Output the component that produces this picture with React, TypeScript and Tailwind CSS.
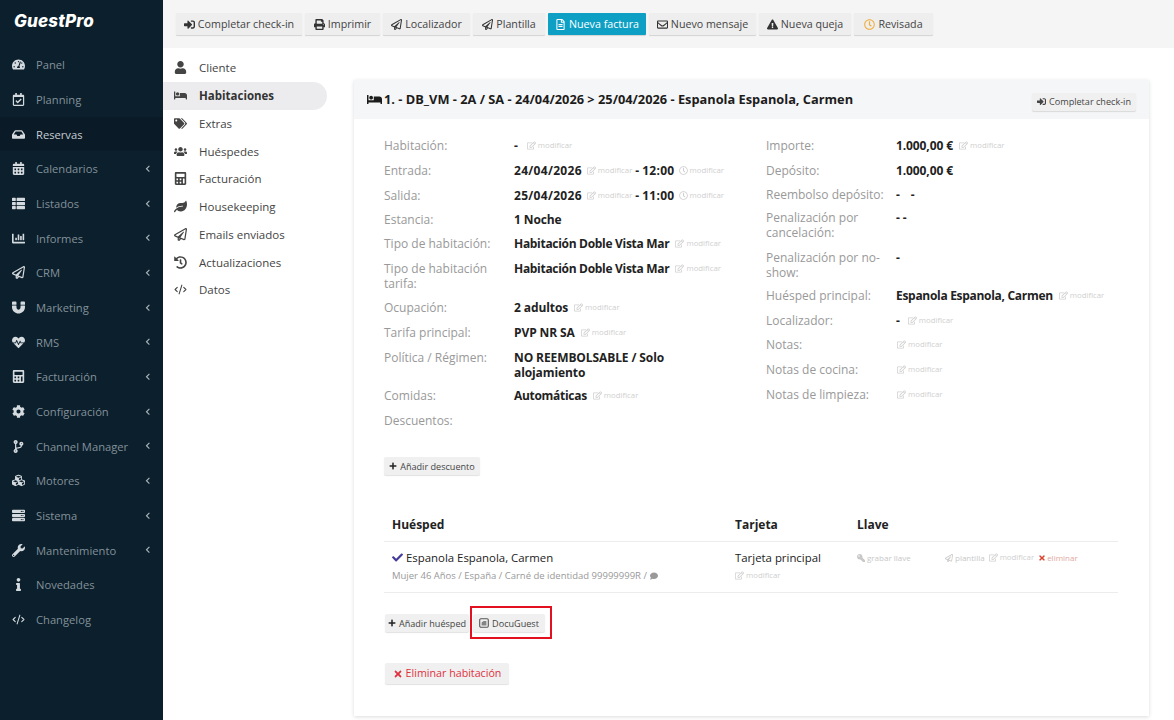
import type { ReactNode } from "react";
import type { IconType } from "react-icons";
import { CodeXml } from "lucide-react";
import {
  FaBed,
  FaCalculator,
  FaCalendarAlt,
  FaChartBar,
  FaCheck,
  FaChevronLeft,
  FaCodeBranch,
  FaCog,
  FaComment,
  FaCubes,
  FaExclamationTriangle,
  FaHeartbeat,
  FaHistory,
  FaInbox,
  FaInfo,
  FaKey,
  FaLeaf,
  FaMagnet,
  FaPlus,
  FaPrint,
  FaRegCalendarCheck,
  FaRegClock,
  FaRegEdit,
  FaRegEnvelope,
  FaRegFileAlt,
  FaRegPaperPlane,
  FaServer,
  FaSignInAlt,
  FaTachometerAlt,
  FaTags,
  FaThList,
  FaTimes,
  FaUser,
  FaUsers,
  FaWrench,
} from "react-icons/fa";

const SIDEBAR: { label: string; icon: IconType; sub?: boolean; active?: boolean }[] = [
  { label: "Panel", icon: FaTachometerAlt },
  { label: "Planning", icon: FaRegCalendarCheck },
  { label: "Reservas", icon: FaInbox, active: true },
  { label: "Calendarios", icon: FaCalendarAlt, sub: true },
  { label: "Listados", icon: FaThList, sub: true },
  { label: "Informes", icon: FaChartBar, sub: true },
  { label: "CRM", icon: FaRegPaperPlane, sub: true },
  { label: "Marketing", icon: FaMagnet, sub: true },
  { label: "RMS", icon: FaHeartbeat, sub: true },
  { label: "Facturación", icon: FaCalculator, sub: true },
  { label: "Configuración", icon: FaCog, sub: true },
  { label: "Channel Manager", icon: FaCodeBranch, sub: true },
  { label: "Motores", icon: FaCubes, sub: true },
  { label: "Sistema", icon: FaServer, sub: true },
  { label: "Mantenimiento", icon: FaWrench, sub: true },
  { label: "Novedades", icon: FaInfo },
  { label: "Changelog", icon: CodeXml as IconType },
];

const TOOLBAR: { label: string; icon: IconType; width: string; iconClass?: string; primary?: boolean }[] = [
  { label: "Completar check-in", icon: FaSignInAlt, width: "w-[126px]" },
  { label: "Imprimir", icon: FaPrint, width: "w-[75px]" },
  { label: "Localizador", icon: FaRegPaperPlane, width: "w-[87px]" },
  { label: "Plantilla", icon: FaRegPaperPlane, width: "w-[72px]" },
  { label: "Nueva factura", icon: FaRegFileAlt, width: "w-[98px]", iconClass: "text-white", primary: true },
  { label: "Nuevo mensaje", icon: FaRegEnvelope, width: "w-[107px]" },
  { label: "Nueva queja", icon: FaExclamationTriangle, width: "w-[92px]" },
  { label: "Revisada", icon: FaRegClock, width: "w-[79px]", iconClass: "text-[#f0ad3c]" },
];

const SECTIONS: { label: string; icon: IconType; active?: boolean }[] = [
  { label: "Cliente", icon: FaUser },
  { label: "Habitaciones", icon: FaBed, active: true },
  { label: "Extras", icon: FaTags },
  { label: "Huéspedes", icon: FaUsers },
  { label: "Facturación", icon: FaCalculator },
  { label: "Housekeeping", icon: FaLeaf },
  { label: "Emails enviados", icon: FaRegPaperPlane },
  { label: "Actualizaciones", icon: FaHistory },
  { label: "Datos", icon: CodeXml as IconType },
];

function Modify({ clock, className = "" }: { clock?: boolean; className?: string }) {
  const Icon = clock ? FaRegClock : FaRegEdit;
  return (
    <span className={`inline-flex items-center gap-[2px] text-[7.8px] font-normal tracking-normal text-[#cfcfcf] ${className}`}>
      <Icon className="text-[9px]" />
      modificar
    </span>
  );
}

function Row({ label, h, children }: { label: ReactNode; h: string; children?: ReactNode }) {
  return (
    <div className={`flex ${h}`}>
      <div className="w-[130px] shrink-0 pr-[8px] text-[12px] text-[#999]">{label}</div>
      <div className="flex-1 whitespace-nowrap text-[12px] font-bold tracking-[-0.1px] text-[#222]">{children}</div>
    </div>
  );
}

function Date({ children }: { children: ReactNode }) {
  return <span className="tracking-[0.3px]">{children}</span>;
}

function Name({ children }: { children: ReactNode }) {
  return <span className="tracking-[-0.3px]">{children}</span>;
}

function SmallButton({ children, className = "" }: { children: ReactNode; className?: string }) {
  return (
    <button className={`flex items-center justify-center gap-[3px] whitespace-nowrap rounded-[2px] bg-[#f0f0f0] text-[9.1px] text-[#444] shadow-[0_1px_1px_rgba(0,0,0,0.12)] ${className}`}>
      {children}
    </button>
  );
}

export default function App() {
  return (
    <div className="flex h-[720px] w-[1174px] overflow-hidden bg-white font-['Open_Sans','Noto_Sans',sans-serif] text-[12px] leading-[15px]">
      <aside className="flex w-[163px] shrink-0 flex-col bg-[#0b1f2c]">
        <div className="flex h-[47.5px] shrink-0 items-center pl-[14px] pb-[4px] font-['Inter',sans-serif] text-[17px] font-extrabold italic tracking-[0.2px] text-white">
          GuestPro
        </div>
        {SIDEBAR.map((item) => (
          <div
            key={item.label}
            className={`flex h-[34.67px] shrink-0 items-center text-[11.2px] ${item.active ? "bg-[#0a1a26] text-[#c5cdd2]" : "text-[#83919a]"}`}
          >
            <span className="flex w-[36px] justify-center pl-[1px] text-[#d5dade]">
              <item.icon size={13} />
            </span>
            <span className="flex-1">{item.label}</span>
            {item.sub && <FaChevronLeft className="mr-[12px] text-[7.5px] text-[#aab4ba]" />}
          </div>
        ))}
      </aside>

      <div className="flex min-w-0 flex-1 flex-col">
        <header className="flex h-[48px] shrink-0 items-start gap-[3px] bg-[#f5f5f5] pl-[13px] pt-[13px]">
          {TOOLBAR.map((btn) => (
            <button
              key={btn.label}
              className={`flex h-[22px] items-center justify-center gap-[3px] rounded-[1px] text-[10.7px] shadow-[0_1px_1px_rgba(0,0,0,0.14)] ${btn.width} ${btn.primary ? "bg-[#0e9fc4] text-white" : "bg-[#eeeeee] text-[#444]"}`}
            >
              <btn.icon className={`text-[11px] ${btn.iconClass ?? "text-[#333]"}`} />
              {btn.label}
            </button>
          ))}
        </header>

        <div className="flex flex-1">
          <nav className="w-[164px] shrink-0 pt-[6px]">
            {SECTIONS.map((s) => (
              <div
                key={s.label}
                className={`flex h-[27.75px] items-center rounded-r-[14px] text-[11.5px] ${s.active ? "bg-[#ececee] font-bold text-[#333]" : "text-[#444]"}`}
              >
                <span className="flex w-[36px] justify-center pr-[1px] text-[#444]">
                  <s.icon size={13} />
                </span>
                {s.label}
              </div>
            ))}
          </nav>

          <main className="ml-[27px] mt-[32px] mb-[4px] w-[795px] bg-white shadow-[0_1px_4px_rgba(0,0,0,0.14)]">
            <div className="flex h-[39px] items-center justify-between bg-[#f5f6f7] px-[13px]">
              <div className="flex items-center gap-[2px] text-[12.8px] font-bold text-[#1c1c1c]">
                <FaBed className="text-[15px]" />
                <span>1. - DB_VM - 2A / SA - 24/04/2026 &gt; 25/04/2026 - Espanola Espanola, Carmen</span>
              </div>
              <SmallButton className="mt-[4px] h-[18px] w-[104px]">
                <FaSignInAlt className="text-[9px]" />
                Completar check-in
              </SmallButton>
            </div>

            <div className="flex px-[30px] pt-[19px]">
              <section className="w-[382px]">
                <Row label="Habitación:" h="h-[25px]">
                  - <Modify className="ml-[6px]" />
                </Row>
                <Row label="Entrada:" h="h-[25px]">
                  <Date>24/04/2026</Date> <Modify className="ml-[2px]" /> - <Date>12:00</Date> <Modify clock className="ml-[1px]" />
                </Row>
                <Row label="Salida:" h="h-[24px]">
                  <Date>25/04/2026</Date> <Modify className="ml-[2px]" /> - <Date>11:00</Date> <Modify clock className="ml-[1px]" />
                </Row>
                <Row label="Estancia:" h="h-[24px]">1 Noche</Row>
                <Row label="Tipo de habitación:" h="h-[25px]">
                  <Name>Habitación Doble Vista Mar</Name> <Modify className="ml-[3px]" />
                </Row>
                <Row label="Tipo de habitación tarifa:" h="h-[39px]">
                  <Name>Habitación Doble Vista Mar</Name> <Modify className="ml-[3px]" />
                </Row>
                <Row label="Ocupación:" h="h-[25px]">
                  2 adultos <Modify className="ml-[3px]" />
                </Row>
                <Row label="Tarifa principal:" h="h-[25px]">
                  PVP NR SA <Modify className="ml-[3px]" />
                </Row>
                <Row label="Política / Régimen:" h="h-[38px]">
                  NO REEMBOLSABLE / Solo
                  <br />
                  alojamiento
                </Row>
                <Row label="Comidas:" h="h-[25px]">
                  <Name>Automáticas</Name> <Modify className="ml-[3px]" />
                </Row>
                <Row label="Descuentos:" h="h-[25px]" />
              </section>
              <section className="flex-1">
                <Row label="Importe:" h="h-[25px]">
                  1.000,00 € <Modify className="ml-[3px]" />
                </Row>
                <Row label="Depósito:" h="h-[24px]">1.000,00 €</Row>
                <Row label="Reembolso depósito:" h="h-[23px]">
                  - <span className="ml-[8px]">-</span>
                </Row>
                <Row label="Penalización por cancelación:" h="h-[40px]">- -</Row>
                <Row label="Penalización por no-show:" h="h-[38px]">-</Row>
                <Row label="Huésped principal:" h="h-[25px]">
                  <Name>Espanola Espanola, Carmen</Name> <Modify className="ml-[3px]" />
                </Row>
                <Row label="Localizador:" h="h-[24px]">
                  - <Modify className="ml-[5px]" />
                </Row>
                <Row label="Notas:" h="h-[25px]"><Modify className="ml-[1px]" /></Row>
                <Row label="Notas de cocina:" h="h-[25px]"><Modify className="ml-[1px]" /></Row>
                <Row label="Notas de limpieza:" h="h-[25px]"><Modify className="ml-[1px]" /></Row>
              </section>
            </div>

            <div className="px-[30px] pt-[19px]">
              <SmallButton className="h-[18px] w-[96px]">
                <FaPlus className="text-[8px] text-[#222]" />
                Añadir descuento
              </SmallButton>
            </div>

            <div className="mx-[30px] mt-[34px] w-[734px] text-[#222]">
              <div className="flex h-[33px] items-center border-b border-[#ececec] pb-[1px] pl-[8px] font-bold">
                <span className="w-[343px]">Huésped</span>
                <span className="w-[122px]">Tarjeta</span>
                <span>Llave</span>
              </div>
              <div className="flex h-[51px] border-b border-[#ececec] pl-[8px] pt-[8px]">
                <div className="w-[343px]">
                  <div className="flex items-center gap-[3px] text-[11.4px]">
                    <FaCheck className="text-[11px] text-[#433a9a]" />
                    Espanola Espanola, Carmen
                  </div>
                  <div className="mt-[3px] flex items-center gap-[3px] text-[9.5px] text-[#999]">
                    Mujer 46 Años / España / Carné de identidad 99999999R /
                    <FaComment className="text-[8px]" />
                  </div>
                </div>
                <div className="w-[122px]">
                  <div className="text-[11.4px]">Tarjeta principal</div>
                  <Modify className="mt-[3px]" />
                </div>
                <div className="flex h-[15px] items-center text-[8px] text-[#c8c8c8]">
                  <span className="flex w-[88px] items-center gap-[2px]">
                    <FaKey className="-scale-x-100 text-[8px]" />
                    grabar llave
                  </span>
                  <span className="flex items-center gap-[2px]">
                    <FaRegPaperPlane className="text-[8px]" />
                    plantilla
                  </span>
                  <Modify className="ml-[4px]" />
                  <span className="ml-[4px] flex items-center gap-[1px] text-[#e2a8a0]">
                    <FaTimes className="text-[8px] text-[#d9432f]" />
                    eliminar
                  </span>
                </div>
              </div>
            </div>

            <div className="mt-[21px] flex gap-[4px] pl-[31px]">
              <SmallButton className="h-[18px] w-[84px]">
                <FaPlus className="text-[8px] text-[#222]" />
                Añadir huésped
              </SmallButton>
              <SmallButton className="relative h-[18px] w-[72px] bg-[#ececec]">
                <svg viewBox="0 0 10 10" className="h-[10px] w-[10px] text-[#555]" fill="none" stroke="currentColor">
                  <rect x="0.7" y="0.7" width="8.6" height="8.6" rx="1.2" strokeWidth="1.1" />
                  <path d="M2.6 7.4V4.4L4.6 3H7.4V7.4Z" fill="currentColor" stroke="none" opacity="0.7" />
                </svg>
                DocuGuest
                <span className="absolute -bottom-[7px] -left-[3px] -right-[7px] -top-[8px] border-2 border-[#e3101f]" />
              </SmallButton>
            </div>

            <div className="mt-[31px] pl-[31px]">
              <SmallButton className="h-[21px] w-[124px]">
                <FaTimes className="text-[10px] text-[#e0313f]" />
                <span className="text-[10.7px] text-[#e0313f]">Eliminar habitación</span>
              </SmallButton>
            </div>
          </main>
        </div>
      </div>
    </div>
  );
}
